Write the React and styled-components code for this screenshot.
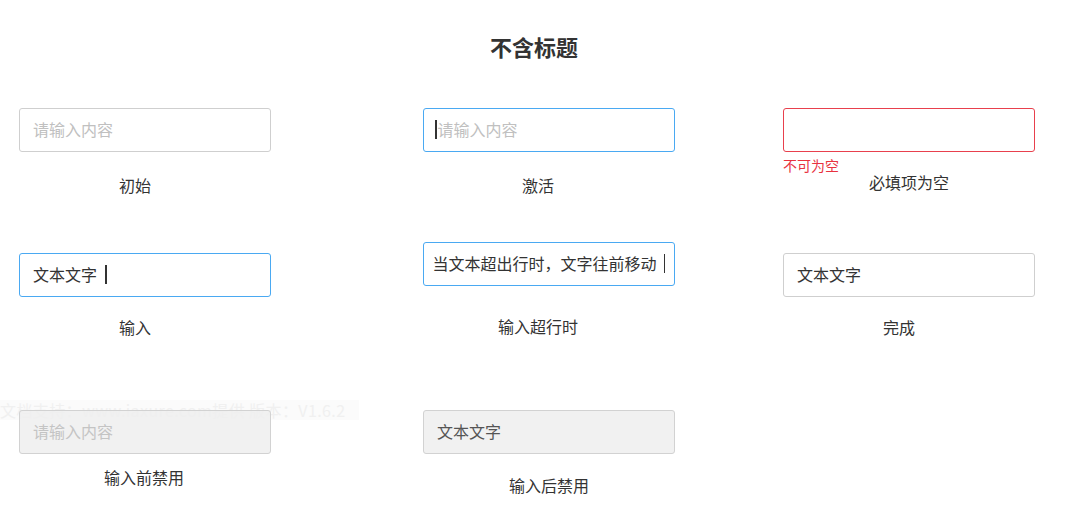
import React from "react";
import styled, { createGlobalStyle, css } from "styled-components";

const GlobalStyle = createGlobalStyle`
  html, body {
    margin: 0;
    padding: 0;
    background: #ffffff;
  }
  body {
    font-family: "Noto Sans CJK SC", "Liberation Sans", sans-serif;
    color: #333333;
  }
`;

const Page = styled.div`
  position: relative;
  width: 1080px;
  height: 529px;
  padding-top: 31px;
  box-sizing: border-box;
  overflow: hidden;
`;

const Title = styled.h1`
  margin: 0 0 47px;
  padding-right: 12px;
  font-size: 22px;
  line-height: 30px;
  font-weight: 700;
  text-align: center;
  color: #333;
`;

const Grid = styled.div`
  position: relative;
  z-index: 1;
  display: grid;
  grid-template-columns: 404px 360px 252px;
  grid-template-rows: 134px 168px auto;
  padding-left: 19px;
`;

const Cell = styled.div`
  display: flex;
  flex-direction: column;
  align-items: flex-start;
  width: 252px;
`;

const variants = {
  idle: css`
    border-color: #cfcfcf;
    background: #fff;
  `,
  active: css`
    border-color: #4aa9f2;
    background: #fff;
  `,
  error: css`
    border-color: #e8404d;
    background: #fff;
  `,
  disabled: css`
    border-color: #d2d2d2;
    background: rgba(238, 238, 238, 0.85);
  `,
};

const Box = styled.div`
  box-sizing: border-box;
  width: 252px;
  height: 44px;
  margin-top: ${(p) => p.$top || 0}px;
  border: 1px solid;
  border-radius: 3px;
  display: flex;
  align-items: center;
  justify-content: ${(p) => (p.$end ? "flex-end" : "flex-start")};
  padding: ${(p) => (p.$end ? "0 9px 0 0" : `0 0 0 ${p.$inset ?? 13}px`)};
  overflow: hidden;
  white-space: nowrap;
  font-size: 16px;
  line-height: 22px;
  ${(p) => variants[p.$variant]}
`;

const Placeholder = styled.span`
  margin-top: -2px;
  color: ${(p) => (p.$disabled ? "#c4c4c4" : "#c0c0c0")};
`;

const Value = styled.span`
  margin-top: -2px;
  color: ${(p) => (p.$disabled ? "#555" : "#333")};
`;

const Caret = styled.span`
  display: inline-block;
  width: 1.5px;
  height: 19px;
  margin-top: -2px;
  background: #333;
  margin-left: ${(p) => p.$gap || 0}px;
  margin-right: ${(p) => (p.$before ? 1 : 0)}px;
`;

const ErrorText = styled.div`
  margin-top: 5px;
  font-size: 14px;
  line-height: 16px;
  color: #e8323f;
`;

const Label = styled.div`
  align-self: center;
  margin-top: ${(p) => p.$gap}px;
  transform: translateX(${(p) => p.$shift || 0}px);
  font-size: 16px;
  line-height: 22px;
  color: #333;
`;

const Watermark = styled.div`
  position: absolute;
  left: 0;
  top: 400px;
  z-index: 0;
  padding: 1px 14px 1px 0;
  font-size: 16px;
  line-height: 18px;
  letter-spacing: 0.4px;
  color: #f0f0f0;
  background: #fbfbfb;
  white-space: nowrap;
  pointer-events: none;
`;

export default function App() {
  return (
    <>
      <GlobalStyle />
      <Page>
        <Title>不含标题</Title>
        <Watermark>文档支持：www.iaxure.com提供 版本：V1.6.2</Watermark>
        <Grid>
          <Cell>
            <Box $variant="idle">
              <Placeholder>请输入内容</Placeholder>
            </Box>
            <Label $gap={22} $shift={-10}>初始</Label>
          </Cell>
          <Cell>
            <Box $variant="active" $inset={11}>
              <Caret $before />
              <Placeholder>请输入内容</Placeholder>
            </Box>
            <Label $gap={22} $shift={-11}>激活</Label>
          </Cell>
          <Cell>
            <Box $variant="error" />
            <ErrorText>不可为空</ErrorText>
            <Label $gap={-2}>必填项为空</Label>
          </Cell>

          <Cell>
            <Box $variant="active" $top={11}>
              <Value>文本文字</Value>
              <Caret $gap={8} />
            </Box>
            <Label $gap={19} $shift={-10}>输入</Label>
          </Cell>
          <Cell>
            <Box $variant="active" $end>
              <Value>当文本超出行时，文字往前移动</Value>
              <Caret $gap={7} />
            </Box>
            <Label $gap={29} $shift={-11}>输入超行时</Label>
          </Cell>
          <Cell>
            <Box $variant="idle" $top={11}>
              <Value>文本文字</Value>
            </Box>
            <Label $gap={19} $shift={-10}>完成</Label>
          </Cell>

          <Cell>
            <Box $variant="disabled">
              <Placeholder $disabled>请输入内容</Placeholder>
            </Box>
            <Label $gap={12} $shift={-1}>输入前禁用</Label>
          </Cell>
          <Cell>
            <Box $variant="disabled">
              <Value $disabled>文本文字</Value>
            </Box>
            <Label $gap={20} $shift={0}>输入后禁用</Label>
          </Cell>
        </Grid>
      </Page>
    </>
  );
}
